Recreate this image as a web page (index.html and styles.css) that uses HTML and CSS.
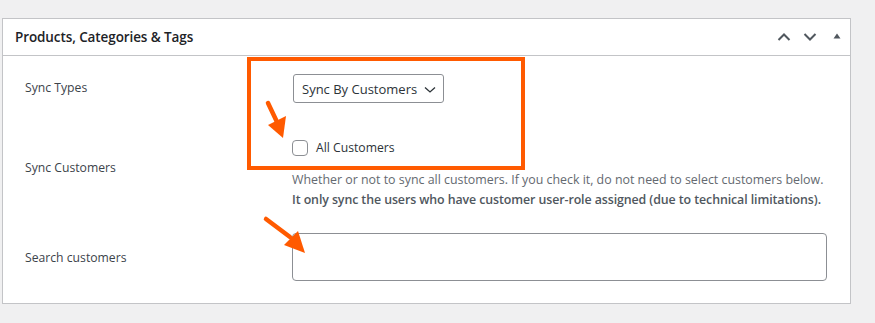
FILE: index.html
```html
<!DOCTYPE html>
<html>
<head>
<meta charset="utf-8">
<link rel="stylesheet" href="styles.css">
</head>
<body>
<div class="panel">
  <div class="panel-head">
    <h2 class="title">Products, Categories &amp; Tags</h2>
    <div class="head-actions">
      <svg class="ico" width="14" height="10" viewBox="0 0 14 10"><path d="M1.5 8 L7 2.5 L12.5 8" fill="none" stroke="#50575e" stroke-width="2"/></svg>
      <svg class="ico" width="14" height="10" viewBox="0 0 14 10"><path d="M1.5 2 L7 7.5 L12.5 2" fill="none" stroke="#50575e" stroke-width="2"/></svg>
      <svg class="ico tri" width="8" height="6" viewBox="0 0 8 6"><path d="M0.5 5.5 L4 0.5 L7.5 5.5 Z" fill="#50575e"/></svg>
    </div>
  </div>
  <div class="panel-body">
    <div class="row row-types">
      <div class="label">Sync Types</div>
      <div class="field">
        <div class="select">Sync By Customers
          <svg class="caret" width="12" height="8" viewBox="0 0 12 8"><path d="M1 1.5 L6 6 L11 1.5" fill="none" stroke="#2c3338" stroke-width="1.3"/></svg>
        </div>
      </div>
    </div>
    <div class="row row-customers">
      <div class="label">Sync Customers</div>
      <div class="field">
        <label class="check"><span class="box"></span>All Customers</label>
        <p class="desc">Whether or not to sync all customers. If you check it, do not need to select customers below.<br><strong>It only sync the users who have customer user-role assigned (due to technical limitations).</strong></p>
      </div>
    </div>
    <div class="row row-search">
      <div class="label">Search customers</div>
      <div class="field">
        <div class="search"></div>
      </div>
    </div>
  </div>
</div>
<div class="highlight"></div>
<svg class="arrows" width="875" height="323" viewBox="0 0 875 323">
  <line x1="268" y1="103" x2="277" y2="122" stroke="#ff5a00" stroke-width="4.5" stroke-linecap="round"/>
  <polygon points="268,125 286,116 283,138" fill="#ff5a00"/>
  <line x1="266" y1="219" x2="290" y2="237" stroke="#ff5a00" stroke-width="4.5" stroke-linecap="round"/>
  <polygon points="298,231 284,245 305,253" fill="#ff5a00"/>
</svg>
</body>
</html>
```
FILE: styles.css
```css
* { box-sizing: border-box; }
html, body { margin: 0; padding: 0; }
body {
  background: #f0f0f1;
  font-family: "Open Sans", "Noto Sans", sans-serif;
  color: #3c434a;
  width: 875px;
  height: 323px;
  overflow: hidden;
  position: relative;
  padding: 18px 0 0 2px;
}
.panel {
  width: 849px;
  height: 286px;
  background: #fff;
  border: 1px solid #c3c4c7;
}
.panel-head {
  height: 37px;
  border-bottom: 1px solid #c3c4c7;
  display: flex;
  align-items: center;
  justify-content: space-between;
  padding: 0 9px 0 12px;
}
.title {
  margin: 0;
  font-size: 13.5px;
  font-weight: 600;
  color: #1d2327;
  letter-spacing: -0.1px;
}
.head-actions {
  display: flex;
  align-items: center;
  gap: 12px;
}
.ico { display: block; }
.tri { margin-left: 4px; margin-top: -2px; }
.panel-body {
  padding: 0 0 0 22px;
}
.row { display: flex; }
.label {
  width: 267px;
  flex: none;
  font-size: 12.2px;
  line-height: 20px;
}
.row-types { padding-top: 18px; }
.row-types .label { padding-top: 4px; }
.row-customers .label { padding-top: 55px; }
.row-customers .field { padding-top: 35px; }
.row-search .label { padding-top: 38px; }
.row-search .field { padding-top: 23px; }
.select {
  width: 151px;
  height: 29px;
  margin-left: 1px;
  border: 1px solid #8c8f94;
  border-radius: 3px;
  font-size: 13px;
  color: #2c3338;
  padding: 0 0 0 8px;
  display: flex;
  align-items: center;
  position: relative;
}
.caret { position: absolute; right: 7px; top: 11px; }
.check {
  display: flex;
  align-items: center;
  font-size: 12.2px;
  line-height: 20px;
  color: #2c3338;
}
.box {
  width: 16px;
  height: 16px;
  border: 1px solid #8c8f94;
  border-radius: 4px;
  margin-right: 8px;
  background: #fff;
}
.desc {
  margin: 12px 0 0;
  font-size: 12.4px;
  line-height: 20px;
  color: #646970;
}
.desc strong { color: #50575e; font-weight: 600; letter-spacing: -0.09px; }
.search {
  width: 535px;
  height: 48px;
  border: 1px solid #8c8f94;
  border-radius: 4px;
}
.highlight {
  position: absolute;
  left: 247px;
  top: 57px;
  width: 278px;
  height: 113px;
  border: 4px solid #ff5a00;
}
.arrows { position: absolute; left: 0; top: 0; }
```
